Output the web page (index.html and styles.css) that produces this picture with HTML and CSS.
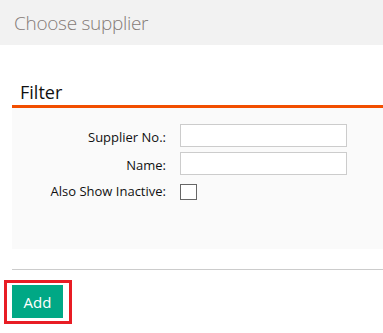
FILE: index.html
```html
<!DOCTYPE html>
<html lang="en">
<head>
    <meta charset="UTF-8">
    <title>Choose supplier</title>
    <link rel="stylesheet" href="styles.css">
</head>
<body>
    <!-- page title bar -->
    <div class="titlebar">Choose supplier</div>

    <!-- filter section -->
    <div class="filter">
        <h2 class="filter-title">Filter</h2>
        <div class="filter-panel">
            <div class="form-grid">
                <label class="form-label" for="supplierNo">Supplier No.:</label>
                <input class="form-input" id="supplierNo" type="text">

                <label class="form-label" for="supplierName">Name:</label>
                <input class="form-input" id="supplierName" type="text">

                <label class="form-label" for="inactive">Also Show Inactive:</label>
                <span class="form-check"><input id="inactive" type="checkbox" class="check"></span>
            </div>
        </div>
    </div>

    <!-- footer with action button -->
    <div class="actions">
        <span class="highlight"><button class="btn-add">Add</button></span>
    </div>
</body>
</html>
```

FILE: styles.css
```css
*{
    margin: 0;
    padding: 0;
    box-sizing: border-box;
}

body{
    font-family: "Open Sans", "Noto Sans", sans-serif;
    background-color: #fff;
    color: #111;
    width: 383px;
}

.titlebar{
    height: 45px;
    background-color: #f2f2f2;
    color: #857b77;
    font-size: 19px;
    font-weight: 300;
    letter-spacing: -0.3px;
    line-height: 24px;
    padding: 11px 0 0 14px;
}

.filter{
    margin-left: 12px;
    margin-top: 35px;
}

.filter-title{
    font-size: 18px;
    font-weight: 400;
    line-height: 25px;
    padding-left: 8px;
    border-bottom: 3px solid #f24e00;
}

.filter-panel{
    background-color: #fafafa;
    padding: 16px 0 49px;
}

.form-grid{
    display: grid;
    grid-template-columns: 154px 167px;
    column-gap: 14px;
    row-gap: 5px;
    align-items: center;
}

.form-label{
    text-align: right;
    font-size: 13px;
    padding-top: 2px;
}

.form-input{
    height: 23px;
    border: 1px solid #ccc;
    background-color: #fff;
    outline: none;
}

.form-check{
    display: flex;
    padding-top: 4px;
}

.check{
    appearance: none;
    width: 17px;
    height: 16px;
    border: 1px solid #666;
    background-color: #fff;
}

.actions{
    margin-left: 12px;
    margin-top: 20px;
    border-top: 1px solid #ccc;
    padding-top: 10px;
}

.highlight{
    display: inline-block;
    margin-left: -8px;
    border: 3px solid #e81c24;
    padding: 2px 6px 3px 5px;
}

.btn-add{
    display: block;
    width: 51px;
    height: 33px;
    border: none;
    background-color: #00a885;
    color: #fff;
    font-family: "Open Sans", "Noto Sans", sans-serif;
    font-size: 15px;
}
```
